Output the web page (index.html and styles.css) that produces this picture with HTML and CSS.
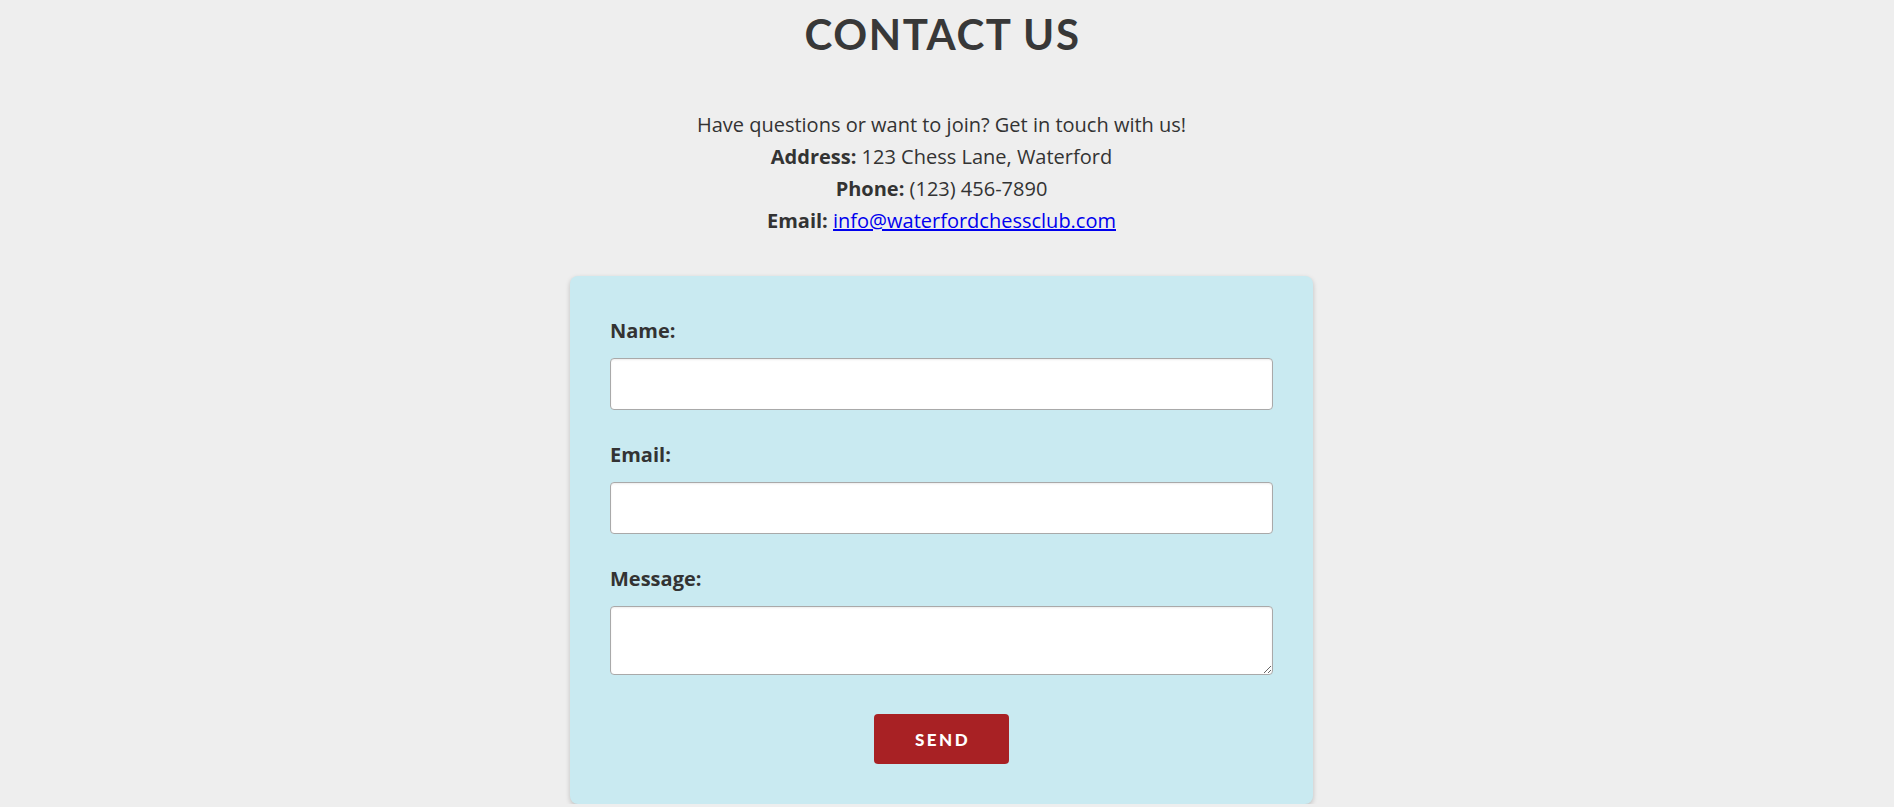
FILE: index.html
```html
<!DOCTYPE html>
<html lang="en">
<head>
<meta charset="utf-8">
<title>Contact Us</title>
<link rel="stylesheet" href="styles.css">
</head>
<body>
<main class="contact">
  <h2 class="contact-title">CONTACT US</h2>
  <div class="contact-info">
    <p>Have questions or want to join? Get in touch with us!</p>
    <p><strong>Address:</strong> 123 Chess Lane, Waterford</p>
    <p><strong>Phone:</strong> (123) 456-7890</p>
    <p><strong>Email:</strong> <a href="#">info@waterfordchessclub.com</a></p>
  </div>
  <form class="contact-form">
    <label class="field-label" for="name">Name:</label>
    <input class="field-input" type="text" id="name">
    <label class="field-label" for="email">Email:</label>
    <input class="field-input" type="email" id="email">
    <label class="field-label" for="message">Message:</label>
    <textarea class="field-input field-textarea" id="message"></textarea>
    <button class="send-btn" type="button">SEND</button>
  </form>
</main>
</body>
</html>
```

FILE: styles.css
```css
html, body {
  margin: 0;
  padding: 0;
}

body {
  background: #eeeeee;
  color: #333333;
  font-family: "Open Sans", "Liberation Sans", sans-serif;
  font-size: 20px;
}

.contact {
  display: flex;
  flex-direction: column;
  align-items: center;
  padding-right: 11px;
}

.contact-title {
  margin: 9px 0 0;
  padding-left: 2px;
  font-family: "Lato", "Inter", sans-serif;
  font-weight: 700;
  font-size: 42px;
  line-height: normal;
  letter-spacing: 1.6px;
  color: #383838;
}

.contact-info {
  margin-top: 50px;
  text-align: center;
  line-height: 32px;
}

.contact-info p {
  margin: 0;
}

.contact-info strong {
  font-weight: 700;
}

.contact-info a {
  color: #0000ee;
  text-decoration: underline;
}

.contact-form {
  margin-top: 39px;
  width: 743px;
  box-sizing: border-box;
  padding: 41px 40px 40px;
  background: #c9eaf1;
  border-radius: 8px;
  box-shadow: 0 2px 5px rgba(0, 0, 0, 0.2);
  display: flex;
  flex-direction: column;
}

.field-label {
  display: block;
  font-weight: 700;
  font-size: 20px;
  line-height: 27px;
  margin-bottom: 14px;
  color: #333333;
}

.field-input {
  display: block;
  box-sizing: border-box;
  width: 100%;
  height: 52px;
  margin: 0 0 31px;
  border: 1px solid #a9a9a9;
  border-radius: 4px;
  background: #ffffff;
  box-shadow: inset 0 1px 2px rgba(0, 0, 0, 0.08);
  font-family: "Open Sans", sans-serif;
  font-size: 18px;
  padding: 8px 10px;
}

.field-textarea {
  height: 69px;
  margin-bottom: 39px;
  resize: vertical;
}

.send-btn {
  align-self: center;
  width: 135px;
  height: 50px;
  border: none;
  border-radius: 4px;
  background: #a82124;
  color: #ffffff;
  font-family: "Lato", "Inter", sans-serif;
  font-weight: 900;
  font-size: 17px;
  letter-spacing: 2.5px;
  padding: 0 0 0 2px;
  cursor: pointer;
}
```
